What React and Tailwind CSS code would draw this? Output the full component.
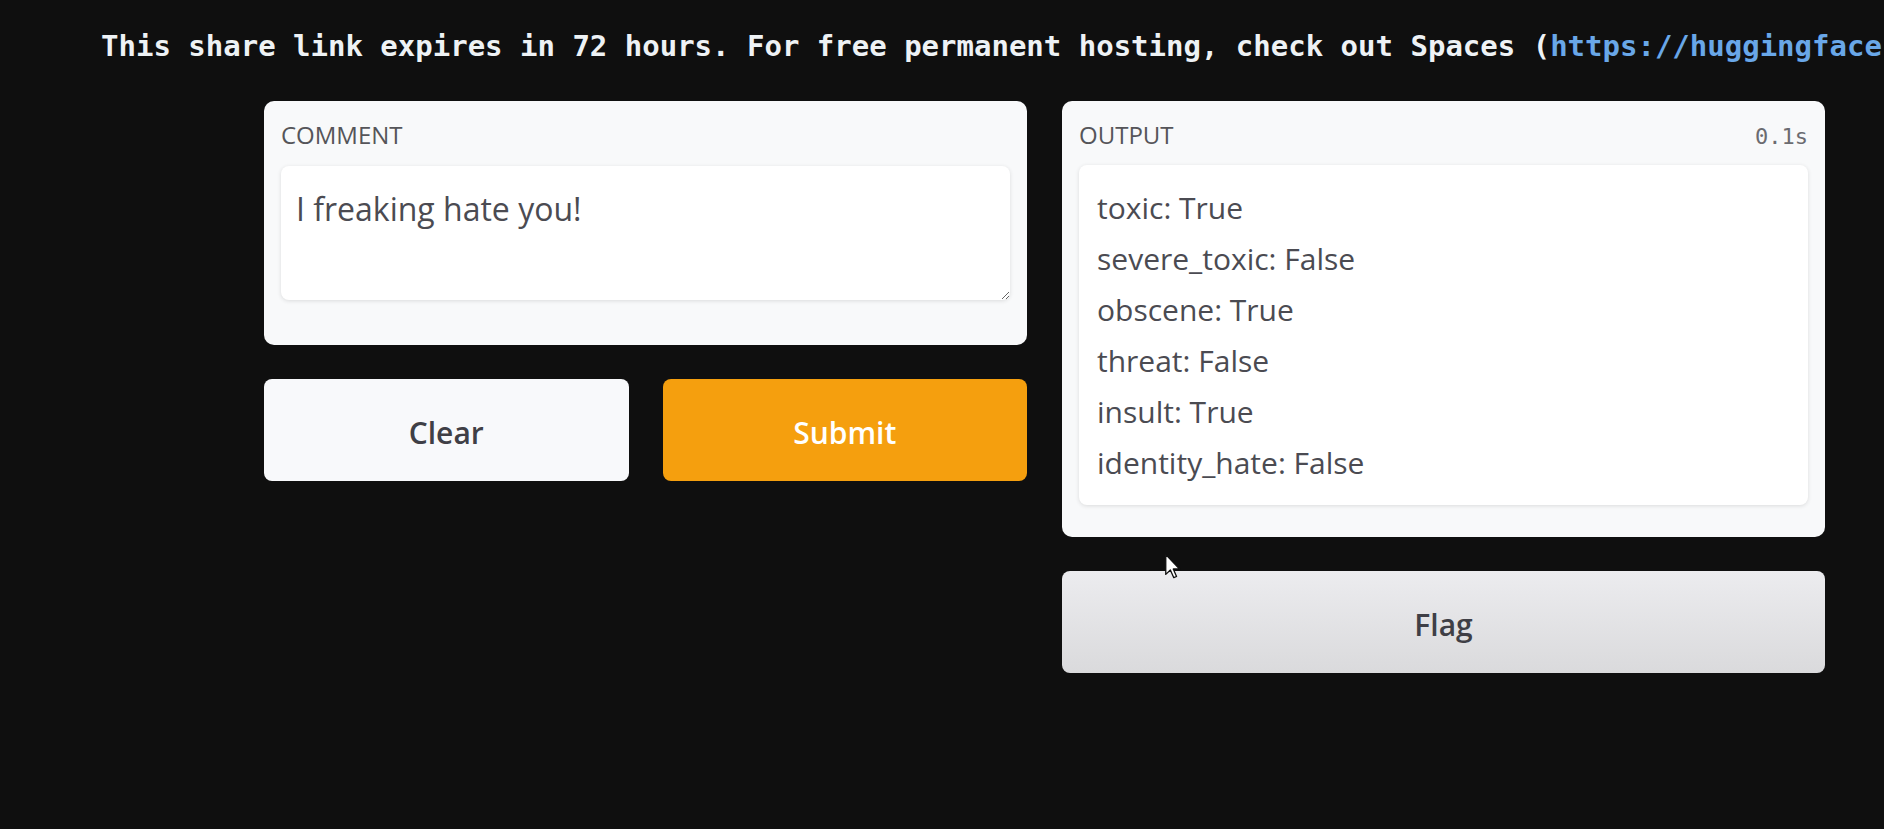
import React from "react";

export default function App() {
  const lines = [
    "toxic: True",
    "severe_toxic: False",
    "obscene: True",
    "threat: False",
    "insult: True",
    "identity_hate: False",
  ];
  return (
    <div className="relative w-[1884px] h-[829px] overflow-hidden bg-[#0f0f0f] font-['Open_Sans',sans-serif]">
      <p className="pl-[101px] pt-[29px] whitespace-nowrap font-['DejaVu_Sans_Mono',monospace] font-bold text-[29px] leading-[34px] text-[#eef2f5]">
        This share link expires in 72 hours. For free permanent hosting, check out Spaces (
        <span className="text-[#69a7e8]">https://huggingface.co/spaces</span>)
      </p>

      <div className="ml-[264px] mt-[38px] w-[1561px] grid grid-cols-2 gap-x-[35px] items-start">
        <div className="flex flex-col gap-[34px]">
          <div className="h-[244px] rounded-[10px] bg-[#f8f9fa] px-[17px] pt-[18px]">
            <div className="text-[24px] leading-[32px] text-[#555559]">COMMENT</div>
            <textarea
              className="mt-[15px] block h-[134px] w-full rounded-[8px] bg-white px-[15px] pt-[19px] text-[32px] leading-[48px] text-[#4b4b52] shadow-[0_1px_4px_rgba(0,0,0,0.12)] outline-none resize-y font-['Open_Sans',sans-serif]"
              defaultValue="I freaking hate you!"
            />
          </div>
          <div className="grid grid-cols-2 gap-[34px]">
            <button className="h-[102px] rounded-[8px] bg-[#f8f9fb] pt-[4px] text-[30px] font-semibold text-[#3f3f46]">
              Clear
            </button>
            <button className="h-[102px] rounded-[8px] bg-[#f59f0e] pt-[4px] text-[30px] font-semibold text-white">
              Submit
            </button>
          </div>
        </div>

        <div className="flex flex-col gap-[34px]">
          <div className="h-[436px] rounded-[10px] bg-[#f8f9fa] px-[17px] pt-[18px]">
            <div className="flex items-baseline justify-between">
              <span className="text-[24px] leading-[32px] text-[#555559]">OUTPUT</span>
              <span className="font-['DejaVu_Sans_Mono',monospace] text-[22px] text-[#6b6b70]">0.1s</span>
            </div>
            <div className="mt-[12px] h-[340px] rounded-[8px] bg-white px-[18px] pt-[17px] shadow-[0_1px_4px_rgba(0,0,0,0.12)]">
              {lines.map((l) => (
                <div key={l} className="text-[30px] leading-[51px] text-[#4b4b52]">
                  {l}
                </div>
              ))}
            </div>
          </div>
          <button className="h-[102px] rounded-[8px] bg-gradient-to-b from-[#ececef] to-[#dadadc] pt-[4px] text-[30px] font-semibold text-[#3f3f46]">
            Flag
          </button>
        </div>
      </div>

      <svg
        className="absolute left-[1165px] top-[554px]"
        width="16"
        height="25"
        viewBox="0 0 12 19"
      >
        <path
          d="M0.5 0.5 L0.5 15.5 L4 12.2 L6.6 18 L8.7 17.1 L6.2 11.4 L11 11.4 Z"
          fill="#ffffff"
          stroke="#111111"
          strokeWidth="1"
          strokeLinejoin="round"
        />
      </svg>
    </div>
  );
}
